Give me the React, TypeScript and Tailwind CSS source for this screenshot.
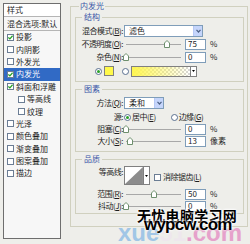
import React from 'react'

const cjk = "font-['Noto_Sans_CJK_SC','Noto_Sans',sans-serif]"

type Item = { label: string; checked?: boolean; active?: boolean; indent?: boolean }

const items: Item[] = [
  { label: '投影', checked: true },
  { label: '内阴影' },
  { label: '外发光' },
  { label: '内发光', checked: true, active: true },
  { label: '斜面和浮雕', checked: true },
  { label: '等高线', indent: true },
  { label: '纹理', indent: true },
  { label: '光泽' },
  { label: '颜色叠加' },
  { label: '渐变叠加' },
  { label: '图案叠加' },
  { label: '描边' },
]

const Check = ({ checked = false }: { checked?: boolean }) => (
  <span className="flex h-[7px] w-[7px] shrink-0 items-center justify-center border border-[#6b7d94] bg-white">
    {checked && (
      <svg width="5" height="5" viewBox="0 0 5 5">
        <path d="M0.4 2.4 L1.9 3.9 L4.6 0.8" fill="none" stroke="#21a121" strokeWidth="1.3" />
      </svg>
    )}
  </span>
)

const Radio = ({ on = false }: { on?: boolean }) => (
  <span className="flex h-[7px] w-[7px] shrink-0 items-center justify-center rounded-full border border-[#5a7090] bg-white">
    {on && <span className="h-[3px] w-[3px] rounded-full bg-[#2aa12a]" />}
  </span>
)

const Key = ({ pre, k, post = '):' }: { pre: string; k: string; post?: string }) => (
  <>
    {pre}(<span className="underline">{k}</span>{post}
  </>
)

const Label = ({ children }: { children: React.ReactNode }) => (
  <div className="w-[47px] shrink-0 whitespace-nowrap text-right text-[8px] leading-none tracking-[-0.5px]">{children}</div>
)

const Slider = ({ value }: { value: number }) => (
  <div className="relative h-full w-[61px] shrink-0">
    <div className="absolute left-[3px] right-[3px] top-[6px] h-px bg-[#a8a8a8]" />
    <svg className="absolute top-[2px]" style={{ left: `${value * 0.55}px` }} width="6" height="8" viewBox="0 0 6 8">
      <path d="M0.5 3 L3 0.5 L5.5 3 V7.5 H0.5 Z" fill="#fff" stroke="#6d8f6d" />
    </svg>
  </div>
)

const Num = ({ v }: { v: string }) => (
  <div className="ml-[1px] flex h-[11px] w-[21px] shrink-0 items-center border border-[#7f9db9] bg-white pl-[2px] text-[8px] leading-none">
    {v}
  </div>
)

const Unit = ({ children }: { children: React.ReactNode }) => (
  <span className="ml-[4px] text-[8px] leading-none">{children}</span>
)

const Select = ({ value, w }: { value: string; w: string }) => (
  <div className={`flex h-[12px] items-center border border-[#7f9db9] bg-white ${w}`}>
    <span className="flex-1 pl-[4px] text-[8px] leading-none">{value}</span>
    <span className="flex h-full w-[9px] items-center justify-center border-l border-[#b6c8f5] bg-[#c5d5fb]">
      <svg width="5" height="4" viewBox="0 0 5 4">
        <path d="M0.5 0.8 L2.5 3 L4.5 0.8" fill="none" stroke="#4d6185" strokeWidth="1.2" />
      </svg>
    </span>
  </div>
)

const Arrow = () => (
  <span className="flex h-full w-[6px] items-center justify-center border border-l-0 border-[#808080] bg-white">
    <svg width="3" height="2" viewBox="0 0 3 2">
      <path d="M0 0 H3 L1.5 2 Z" fill="#000" />
    </svg>
  </span>
)

const Group = ({ title, className, children }: { title: string; className: string; children: React.ReactNode }) => (
  <fieldset className={`border border-[#d0d0bf] ${className}`}>
    <legend className="ml-[6px] px-[2px] text-[8px] leading-[10px] text-[#3b57a8]">{title}</legend>
    {children}
  </fieldset>
)

const StylesList = () => (
  <div className="ml-[3px] mt-[3px] h-[236px] w-[58px] shrink-0 border border-[#6e6e6e] bg-[#f7f7f7] text-[8px] leading-none">
    <div className="flex h-[13px] items-center border-b border-[#b5b5b5] bg-white pl-[3px]">样式</div>
    <div className="flex h-[14px] items-center border-b border-[#b5b5b5] pl-[3px] whitespace-nowrap">混合选项:默认</div>
    {items.map((it) => (
      <div
        key={it.label}
        className={`flex h-[12.4px] items-center gap-[2px] whitespace-nowrap ${it.indent ? 'pl-[14px]' : 'pl-[3px]'} ${
          it.active ? 'bg-[#316ac5] text-white' : ''
        }`}
      >
        <Check checked={it.checked} />
        <span>{it.label}</span>
      </div>
    ))}
  </div>
)

export default function App() {
  return (
    <div className={`relative flex h-[244px] w-[250px] overflow-hidden bg-[#eeeeea] text-[#1e1e1e] ${cjk}`}>
      <StylesList />

      <div className="ml-[9px] mt-[1px]">
        <fieldset className="w-[177px] border border-[#d0d0bf] pb-[12px] pl-[4px] pr-[3px]">
          <legend className="ml-[4px] px-[1px] text-[8px] leading-[10px] text-[#3b57a8]">内发光</legend>

          <Group title="结构" className="mt-[1px] w-[169px] pb-[4px]">
            <div className="mt-[2px] flex h-[14px] items-center">
              <Label><Key pre="混合模式" k="B" /></Label>
              <div className="ml-[1px]"><Select value="滤色" w="w-[79px]" /></div>
            </div>
            <div className="flex h-[12px] items-center">
              <Label><Key pre="不透明度" k="O" /></Label>
              <Slider value={75} />
              <Num v="75" />
              <Unit>%</Unit>
            </div>
            <div className="mt-[1px] flex h-[12px] items-center">
              <Label><Key pre="杂色" k="N" /></Label>
              <Slider value={0} />
              <Num v="0" />
              <Unit>%</Unit>
            </div>
            <div className="mt-[2px] flex h-[12px] items-center pl-[19px]">
              <Radio on />
              <span className="ml-[2px] h-[10px] w-[10px] border border-[#808080] bg-[#fff94a]" />
              <span className="ml-[8px]"><Radio /></span>
              <div className="ml-[2px] flex h-[11px]">
                <span className="h-full w-[60px] border border-[#808080] bg-[linear-gradient(to_right,#fff650,#fff65000),repeating-conic-gradient(#d6d6d6_0_25%,#ffffff_0_50%)] [background-size:100%_100%,4px_4px]" />
                <Arrow />
              </div>
            </div>
          </Group>

          <Group title="图素" className="mt-[2px] w-[169px] pb-[4px]">
            <div className="mt-[2px] flex h-[13px] items-center">
              <Label><Key pre="方法" k="Q" /></Label>
              <div className="ml-[1px]"><Select value="柔和" w="w-[40px]" /></div>
            </div>
            <div className="mt-[2px] flex h-[12px] items-center text-[8px] leading-none tracking-[-0.5px]">
              <Label>源:</Label>
              <span className="ml-[1px]"><Radio on /></span>
              <span className="ml-[1px] whitespace-nowrap"><Key pre="居中" k="E" post=")" /></span>
              <span className="ml-[15px]"><Radio /></span>
              <span className="ml-[1px] whitespace-nowrap"><Key pre="边缘" k="G" post=")" /></span>
            </div>
            <div className="flex h-[12px] items-center">
              <Label><Key pre="阻塞" k="C" /></Label>
              <Slider value={0} />
              <Num v="0" />
              <Unit>%</Unit>
            </div>
            <div className="flex h-[12px] items-center">
              <Label><Key pre="大小" k="S" /></Label>
              <Slider value={8} />
              <Num v="13" />
              <Unit>像素</Unit>
            </div>
          </Group>

          <Group title="品质" className="mt-[2px] w-[169px] pb-[1px]">
            <div className="mt-[2px] flex h-[19px] items-start">
              <div className="mt-[2px]"><Label>等高线:</Label></div>
              <div className="ml-[1px] flex h-[19px]">
                <svg width="20" height="19" viewBox="0 0 20 19" className="border border-[#808080] bg-white">
                  <polygon points="0,19 20,0 20,19" fill="#8c8c8c" />
                </svg>
                <Arrow />
              </div>
              <div className="ml-[4px] mt-[7px] flex items-center gap-[2px] whitespace-nowrap text-[8px] leading-none tracking-[-0.5px]">
                <Check />
                <span><Key pre="消除锯齿" k="L" post=")" /></span>
              </div>
            </div>
            <div className="mt-[3px] flex h-[12px] items-center">
              <Label><Key pre="范围" k="R" /></Label>
              <Slider value={50} />
              <Num v="50" />
              <Unit>%</Unit>
            </div>
            <div className="flex h-[12px] items-center">
              <Label><Key pre="抖动" k="J" /></Label>
              <Slider value={0} />
              <Num v="0" />
              <Unit>%</Unit>
            </div>
          </Group>
        </fieldset>
      </div>

      <div className="absolute left-[118px] top-[221px] font-['Liberation_Sans',Arial,sans-serif] text-[24px] font-bold leading-none opacity-80">
        <span className="text-[#8fbde6]">xue</span>
        <span className="text-[#efe6ee]">51</span>
        <span className="text-[#e58fc4]">.com</span>
      </div>
      <div className="absolute left-[137px] top-[208px] whitespace-nowrap text-[14px] font-bold leading-none tracking-[0.3px] text-black [text-shadow:0_0_3px_#fff,0_0_3px_#fff,0_0_2px_#fff]">
        无忧电脑学习网
      </div>
      <div className="absolute left-[144px] top-[216px] whitespace-nowrap font-['Liberation_Sans',Arial,sans-serif] text-[17px] font-bold leading-none tracking-[-0.8px] text-black [text-shadow:0_0_3px_#fff,0_0_2px_#fff]">
        wypcw.com
      </div>
    </div>
  )
}
